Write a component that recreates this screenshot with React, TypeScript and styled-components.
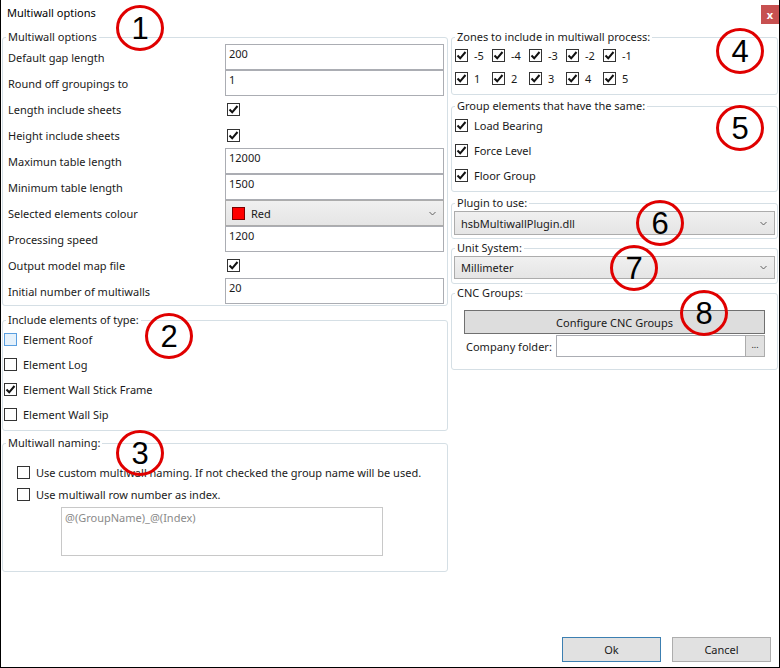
import React from "react";
import styled, { createGlobalStyle } from "styled-components";

const GlobalStyle = createGlobalStyle`
  html, body { margin: 0; padding: 0; background: #fff; }
  body { font-family: "Noto Sans", "Open Sans", sans-serif; font-size: 11px; color: #1a1a1a; }
  * { box-sizing: border-box; }
`;

const Window = styled.div`
  position: relative;
  width: 780px;
  height: 668px;
  display: flex;
  flex-direction: column;
  background: #fff;
  border-left: 1px solid #000;
  border-right: 1px solid #000;
  border-bottom: 1px solid #000;
  overflow: hidden;
  white-space: nowrap;
`;

const TitleBar = styled.div`
  height: 30px;
  display: flex;
  align-items: flex-start;
  justify-content: space-between;
  padding: 5px 0 0 6px;
  color: #000;
`;

const CloseButton = styled.div`
  width: 18px;
  height: 19px;
  background: #c75050;
  color: #fff;
  font-size: 11px;
  font-weight: bold;
  display: flex;
  align-items: center;
  justify-content: center;
`;

const Body = styled.div`
  display: flex;
`;

const Column = styled.div<{ $width?: number }>`
  display: flex;
  flex-direction: column;
  ${(p) => (p.$width ? `width: ${p.$width}px;` : "flex: 1;")}
`;

const Group = styled.fieldset<{ $mt?: number; $ml?: number; $pad: string }>`
  margin: ${(p) => p.$mt ?? 0}px 1px 0 ${(p) => p.$ml ?? 1}px;
  padding: ${(p) => p.$pad};
  border: 1px solid #d5dfe5;
  border-radius: 3px;
  min-width: 0;
`;

// legend sits inside the fieldset's left padding, so pull it back by that amount
const Legend = styled.legend<{ $pl?: number }>`
  padding: 0 2px;
  margin-left: ${(p) => 3 - (p.$pl ?? 0)}px;
  line-height: 14px;
`;

const OptionRow = styled.div`
  height: 26px;
  display: flex;
  align-items: center;
`;

const OptionLabel = styled.div`
  width: 217px;
  padding-top: 1px;
`;

const TextBox = styled.div<{ $h?: number }>`
  flex: 1;
  height: ${(p) => p.$h ?? 26}px;
  border: 1px solid #abadb3;
  background: #fff;
  padding: 1px 3px;
  line-height: 16px;
  align-self: flex-start;
`;

const Combo = styled.div<{ $h: number }>`
  height: ${(p) => p.$h}px;
  flex: 1;
  display: flex;
  align-items: center;
  padding: 0 7px 0 6px;
  border: 1px solid #acacac;
  background: linear-gradient(#f0f0f0, #e5e5e5);
  gap: 6px;
`;

const ComboText = styled.span`
  flex: 1;
`;

const Swatch = styled.span`
  width: 13px;
  height: 13px;
  background: #ff0000;
  border: 1px solid #7a0000;
`;

const BoxWrap = styled.span<{ $hover?: boolean }>`
  width: 13px;
  height: 13px;
  flex: none;
  border: 1px solid ${(p) => (p.$hover ? "#5a9fe0" : "#333")};
  background: ${(p) => (p.$hover ? "#e5f1fb" : "#fff")};
  display: inline-flex;
  align-items: center;
  justify-content: center;
`;

const Check = ({ checked, hover }: { checked?: boolean; hover?: boolean }) => (
  <BoxWrap $hover={hover}>
    {checked && (
      <svg width="11" height="11" viewBox="0 0 11 11">
        <path d="M1.5 5.5 L4.2 8.3 L9.5 2" fill="none" stroke="#111" strokeWidth="2" />
      </svg>
    )}
  </BoxWrap>
);

const CheckCell = styled.span`
  margin-left: 2px;
  display: flex;
`;

const CheckRow = styled.div<{ $h: number }>`
  height: ${(p) => p.$h}px;
  display: flex;
  align-items: center;
  gap: 6px;
`;

const ZoneGrid = styled.div`
  display: grid;
  grid-template-columns: repeat(5, 37px);
  grid-auto-rows: 23px;
`;

const ZoneItem = styled.div`
  display: flex;
  align-items: center;
  gap: 6px;
`;

const Chevron = () => (
  <svg width="7" height="5" viewBox="0 0 7 5">
    <path d="M0.5 1 L3.5 4 L6.5 1" fill="none" stroke="#606060" strokeWidth="1" />
  </svg>
);

const WideButton = styled.div`
  height: 24px;
  margin-top: 10px;
  border: 1px solid #707070;
  background: #dddddd;
  display: flex;
  align-items: center;
  justify-content: center;
`;

const FolderRow = styled.div`
  display: flex;
  align-items: center;
  height: 22px;
  margin-top: 1px;
  padding-left: 2px;
`;

const FolderLabel = styled.span`
  width: 90px;
`;

const BrowseButton = styled.div`
  width: 20px;
  height: 22px;
  border: 1px solid #acacac;
  background: #e1e1e1;
  margin-left: -1px;
  font-size: 9px;
  display: flex;
  align-items: flex-end;
  justify-content: center;
  padding-bottom: 5px;
`;

const NameBox = styled.div`
  margin: 2px 0 0 44px;
  width: 322px;
  height: 49px;
  border: 1px solid #c8c8c8;
  padding: 2px 3px;
  color: #8a8a8a;
`;

const Footer = styled.div`
  margin-top: auto;
  display: flex;
  justify-content: flex-end;
  gap: 11px;
  padding: 0 8px 5px 0;
`;

const DialogButton = styled.div<{ $default?: boolean }>`
  width: 99px;
  height: 25px;
  border: 1px solid ${(p) => (p.$default ? "#3c7fb1" : "#adadad")};
  background: #e1e1e1;
  display: flex;
  align-items: center;
  justify-content: center;
`;

const Marker = styled.svg`
  position: absolute;
  overflow: visible;
`;

const Callout = ({ n, x, y }: { n: number; x: number; y: number }) => (
  <Marker width="50" height="48" viewBox="0 0 50 48" style={{ left: x - 25, top: y - 24 }}>
    <ellipse cx="25" cy="24" rx="22.5" ry="21.5" fill="none" stroke="#e00000" strokeWidth="3" />
    <text
      x="25"
      y="35"
      textAnchor="middle"
      fontFamily="Liberation Sans, Arial, sans-serif"
      fontSize="31"
      fill="#000"
    >
      {n}
    </text>
  </Marker>
);

const options: { label: string; kind: "text" | "check" | "combo"; value?: string }[] = [
  { label: "Default gap length", kind: "text", value: "200" },
  { label: "Round off groupings to", kind: "text", value: "1" },
  { label: "Length include sheets", kind: "check" },
  { label: "Height include sheets", kind: "check" },
  { label: "Maximun table length", kind: "text", value: "12000" },
  { label: "Minimum table length", kind: "text", value: "1500" },
  { label: "Selected elements colour", kind: "combo", value: "Red" },
  { label: "Processing speed", kind: "text", value: "1200" },
  { label: "Output model map file", kind: "check" },
  { label: "Initial number of multiwalls", kind: "text", value: "20" },
];

const elementTypes = [
  { label: "Element Roof", checked: false, hover: true },
  { label: "Element Log", checked: false },
  { label: "Element Wall Stick Frame", checked: true },
  { label: "Element Wall Sip", checked: false },
];

const zones = ["-5", "-4", "-3", "-2", "-1", "1", "2", "3", "4", "5"];

const App = () => {
  return (
    <>
      <GlobalStyle />
      <Window>
        <TitleBar>
          <span>Multiwall options</span>
          <CloseButton>x</CloseButton>
        </TitleBar>
        <Body>
          <Column $width={448}>
            <Group $pad="0 3px 1px 5px">
              <Legend $pl={5}>Multiwall options</Legend>
              {options.map((o) => (
                <OptionRow key={o.label}>
                  <OptionLabel>{o.label}</OptionLabel>
                  {o.kind === "text" && <TextBox>{o.value}</TextBox>}
                  {o.kind === "check" && (
                    <CheckCell>
                      <Check checked />
                    </CheckCell>
                  )}
                  {o.kind === "combo" && (
                    <Combo $h={26}>
                      <Swatch />
                      <ComboText>{o.value}</ComboText>
                      <Chevron />
                    </Combo>
                  )}
                </OptionRow>
              ))}
            </Group>
            <Group $mt={7} $pad="0 3px 3px 1px">
              <Legend $pl={1}>Include elements of type:</Legend>
              {elementTypes.map((e) => (
                <CheckRow key={e.label} $h={25}>
                  <Check checked={e.checked} hover={e.hover} />
                  <span>{e.label}</span>
                </CheckRow>
              ))}
            </Group>
            <Group $mt={5} $pad="11px 3px 15px 14px">
              <Legend $pl={14}>Multiwall naming:</Legend>
              <CheckRow $h={22}>
                <Check />
                <span>Use custom multiwall naming. If not checked the group name will be used.</span>
              </CheckRow>
              <CheckRow $h={22}>
                <Check />
                <span>Use multiwall row number as index.</span>
              </CheckRow>
              <NameBox>@(GroupName)_@(Index)</NameBox>
            </Group>
          </Column>
          <Column>
            <Group $ml={2} $pad="0 3px 4px 3px">
              <Legend $pl={3}>Zones to include in multiwall process:</Legend>
              <ZoneGrid>
                {zones.map((z) => (
                  <ZoneItem key={z}>
                    <Check checked />
                    <span>{z}</span>
                  </ZoneItem>
                ))}
              </ZoneGrid>
            </Group>
            <Group $ml={2} $mt={4} $pad="0 3px 3px 3px">
              <Legend $pl={3}>Group elements that have the same:</Legend>
              {["Load Bearing", "Force Level", "Floor Group"].map((g) => (
                <CheckRow key={g} $h={25}>
                  <Check checked />
                  <span>{g}</span>
                </CheckRow>
              ))}
            </Group>
            <Group $ml={2} $mt={4} $pad="1px 2px 3px 2px">
              <Legend $pl={2}>Plugin to use:</Legend>
              <CheckRow $h={24}>
                <Combo $h={24}>
                  <ComboText>hsbMultiwallPlugin.dll</ComboText>
                  <Chevron />
                </Combo>
              </CheckRow>
            </Group>
            <Group $ml={2} $mt={2} $pad="1px 2px 4px 2px">
              <Legend $pl={2}>Unit System:</Legend>
              <CheckRow $h={23}>
                <Combo $h={23}>
                  <ComboText>Millimeter</ComboText>
                  <Chevron />
                </Combo>
              </CheckRow>
            </Group>
            <Group $ml={2} $mt={2} $pad="0 12px 12px 12px">
              <Legend $pl={12}>CNC Groups:</Legend>
              <WideButton>Configure CNC Groups</WideButton>
              <FolderRow>
                <FolderLabel>Company folder:</FolderLabel>
                <TextBox $h={22} />
                <BrowseButton>...</BrowseButton>
              </FolderRow>
            </Group>
          </Column>
        </Body>
        <Footer>
          <DialogButton $default>Ok</DialogButton>
          <DialogButton>Cancel</DialogButton>
        </Footer>
        <Callout n={1} x={139} y={28} />
        <Callout n={2} x={168} y={336} />
        <Callout n={3} x={139} y={453} />
        <Callout n={4} x={739} y={51} />
        <Callout n={5} x={739} y={128} />
        <Callout n={6} x={659} y={223} />
        <Callout n={7} x={633} y={268} />
        <Callout n={8} x={703} y={313} />
      </Window>
    </>
  );
};

export default App;
